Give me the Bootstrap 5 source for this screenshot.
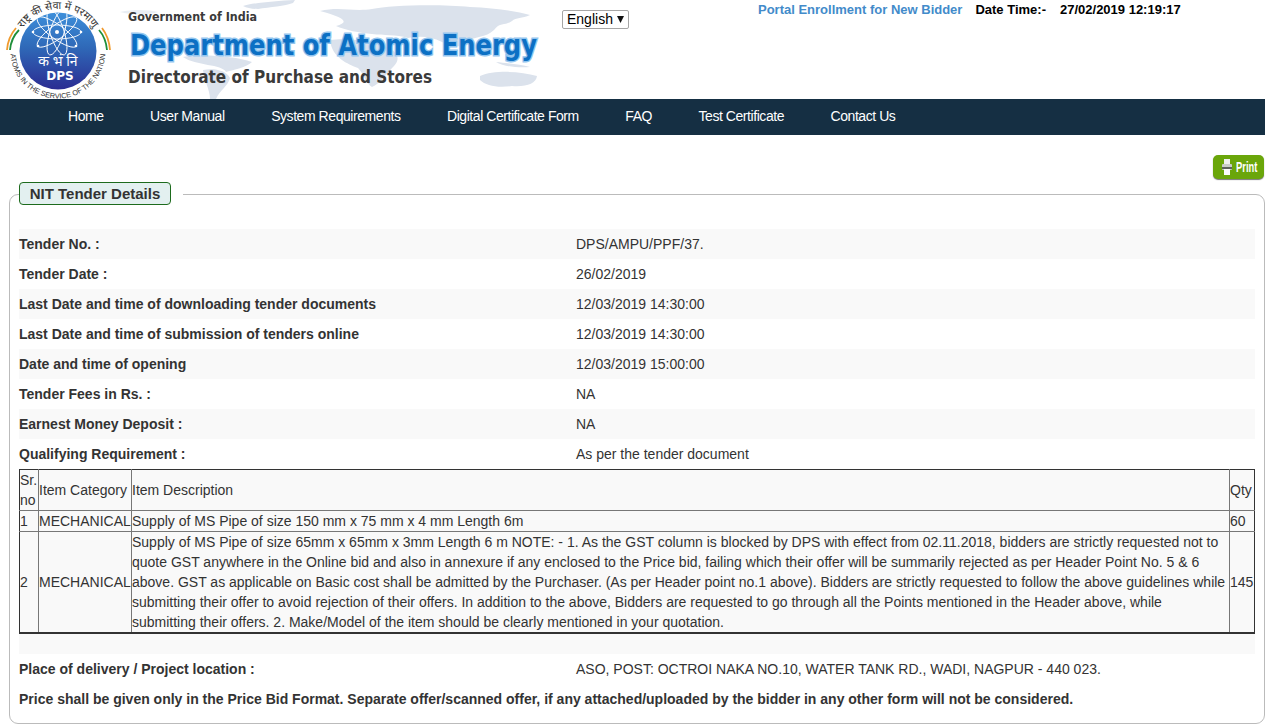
<!DOCTYPE html>
<html lang="en">
<head>
  <meta charset="UTF-8" />
  <meta name="viewport" content="width=device-width, initial-scale=1.0" />
  <title>NIT Tender Details</title>
  <link href="https://cdn.jsdelivr.net/npm/bootstrap@5.3.3/dist/css/bootstrap.min.css" rel="stylesheet" />
  <style>
    body { font-family: "Liberation Sans", Arial, sans-serif; font-size: 14px; color: #333; background: #fff; }

    /* header */
    .site-head { height: 99px; overflow: hidden; }
    .head-map { position: absolute; left: 0; top: 0; }
    .head-logo { width: 128px; height: 99px; flex: none; }
    .head-titles { width: 434px; height: 99px; flex: none; font-family: "DejaVu Sans", sans-serif; font-weight: 700; }
    .gov-text { font-size: 12.5px; fill: #3a3a3a; }
    .dept-text { font-size: 28px; fill: #0c70c4; stroke: #93c5ee; stroke-width: 3px; paint-order: stroke fill; }
    .dir-text { font-size: 18px; fill: #3a3a3a; }
    .lang-pick { width: 67px; height: 19px; margin-top: 10px; padding: 0 0 0 4px; font-size: 14px; line-height: 17px; font-family: "Liberation Sans", Arial, sans-serif; color: #000; appearance: none; background: #fff url("data:image/svg+xml,%3Csvg xmlns='http://www.w3.org/2000/svg' width='7' height='7'%3E%3Cpath d='M0 0h7L3.5 7z' fill='%23111'/%3E%3C/svg%3E") no-repeat 54px 5px; border: 1px solid #a6a6a6; border-radius: 2px; }
    .head-right { position: relative; margin-left: 129px; margin-top: 2px; font-weight: 700; font-size: 13px; line-height: 16px; white-space: nowrap; color: #000; }
    .enroll-link { color: #428bca; text-decoration: none; margin-right: 13px; }
    .stamp-gap { margin-left: 14px; }

    /* nav */
    .main-nav { background: #152f43; height: 36px; padding: 0 0 0 68px; gap: 46.5px; }
    .main-nav a { color: #fff; text-decoration: none; font-size: 14px; letter-spacing: -.44px; line-height: 35px; padding: 0; }

    /* print */
    .print-bar { height: 59px; padding-top: 20px; padding-right: 1px; }
    .print-btn { width: 51px; height: 24px; background: #6aa60a; color: #fff; border-radius: 5px; font-weight: 700; font-size: 14px; box-shadow: 0 1px 1px #777; gap: 4px; border: 0; padding: 0 0 0 9px; }
    .print-word { display: inline-block; width: 22px; text-align: left; transform: scaleX(.67); transform-origin: left center; }

    /* fieldset */
    .nit-box { position: relative; margin-left: 9px; height: 530px; border: 1px solid #bbb; border-radius: 9px; padding: 34px 9px 0 9px; }
    .nit-legend { position: absolute; left: 9px; top: -13px; background: #fff; padding: 0 12px 0 0; }
    .nit-legend span { display: block; width: 152px; height: 23px; line-height: 21px; text-align: center; font-size: 15px; font-weight: 700; background: #e3f0f0; border: 1px solid #1d6b1d; border-radius: 4px; color: #333; }
    .info-row { height: 30px; line-height: 30px; }
    .info-row:nth-child(odd) { background: #f9f9f9; }
    .info-label { flex: 0 0 557px; font-weight: 700; }
    .info-wide { font-weight: 700; }
    .gap-row { height: 20px; background: #f9f9f9; }

    /* items */
    .item-grid { width: 1236px; margin: 0; border-collapse: collapse; table-layout: fixed; background: #f9f9f9; border: 1px solid #333; border-bottom-width: 2px; line-height: 20px; }
    .item-grid td { padding: 0; border: 1px solid #777; vertical-align: middle; background: #f9f9f9; color: #333; }
    .item-grid tr:first-child td { border-top-color: #333; }
    .item-grid tr:last-child td { border-bottom: 2px solid #333; }
    .item-grid td:first-child { border-left-color: #333; }
    .item-grid td:last-child { border-right-color: #333; }
    .cell-sr { width: 19px; }
    .cell-cat { width: 93px; }
    .cell-qty { width: 25px; }
  </style>
</head>
<body>
  <!-- header -->
  <header class="site-head position-relative d-flex">
    <svg class="head-map" width="620" height="99" viewBox="0 0 620 99" fill="#dbe2ec">
      <path d="M120 12 C135 9 150 10 158 12 C150 15 130 15 120 12Z" opacity=".6"/>
      <path d="M243 6 C252 3 275 1 295 0 L293 3 C285 6 270 7 258 9 C252 9 247 8 243 6Z"/>
      <path d="M320 11 C340 6 352 12 372 9 C390 5 440 4 470 7 C495 8 515 11 530 15 C522 19 516 17 512 21 C506 26 500 22 494 30 C486 38 474 36 466 42 C458 50 452 46 442 42 C430 36 420 36 408 38 C396 34 384 36 372 34 C360 33 345 30 336 26 C350 22 345 18 320 11Z"/>
      <path d="M330 40 C345 38 370 40 384 46 C396 50 402 58 394 66 C386 74 380 84 372 87 C366 84 364 74 358 68 C348 64 332 58 330 40Z"/>
      <path d="M183 57 C200 54 235 56 252 62 C246 68 232 70 226 72 C222 64 196 66 183 57Z"/>
      <path d="M203 70 C214 68 226 70 230 78 C228 86 220 90 216 99 L210 99 C210 90 204 80 203 70Z"/>
      <path d="M480 76 C494 70 520 71 537 76 C536 84 526 87 512 86 C498 88 486 86 480 80Z"/>
      <path d="M496 62 C505 63 520 64 530 67 C520 68 504 67 496 62Z"/>
    </svg>

    <div class="head-logo position-relative">
      <svg width="128" height="99" viewBox="0 0 128 99">
        <defs>
          <linearGradient id="logoFill" x1="0" y1="0" x2="0" y2="1">
            <stop offset="0" stop-color="#3d8fda"/>
            <stop offset=".45" stop-color="#2f69b8"/>
            <stop offset="1" stop-color="#2b2c92"/>
          </linearGradient>
          <clipPath id="logoClip"><circle cx="58" cy="51" r="38.5"/></clipPath>
          <path id="arcTop" d="M16 51 A42 42 0 0 1 100 51"/>
          <path id="arcBottom" d="M10.5 51 A47.5 47.5 0 0 0 105.5 51"/>
        </defs>
        <g fill="none" stroke-width="1.8">
          <path d="M7 50 Q8 37 16 28" stroke="#f09a2e"/>
          <path d="M10 50 Q11 38 19 30" stroke="#1f8f3a"/>
          <path d="M110 50 Q109 37 102 28" stroke="#f09a2e"/>
          <path d="M107 50 Q106 38 99 30" stroke="#1f8f3a"/>
        </g>
        <circle cx="58" cy="51" r="38.5" fill="url(#logoFill)"/>
        <g clip-path="url(#logoClip)">
          <g fill="none" stroke="#fff" stroke-width=".9" transform="translate(57 32)">
            <ellipse rx="24" ry="7"/>
            <ellipse rx="24" ry="7" transform="rotate(36)"/>
            <ellipse rx="24" ry="7" transform="rotate(72)"/>
            <ellipse rx="24" ry="7" transform="rotate(108)"/>
            <ellipse rx="24" ry="7" transform="rotate(144)"/>
            <circle r="2" fill="#fff" stroke="none"/>
            <circle cx="-24" cy="0" r="1.3" fill="#fff" stroke="none"/>
            <circle cx="24" cy="0" r="1.3" fill="#fff" stroke="none"/>
            <circle cx="-19" cy="14" r="1.3" fill="#fff" stroke="none"/>
            <circle cx="19" cy="14" r="1.3" fill="#fff" stroke="none"/>
          </g>
        </g>
        <text x="58" y="66" text-anchor="middle" font-family="'Noto Sans','DejaVu Sans',sans-serif" font-size="14" fill="#fff">क भं नि</text>
        <text x="60" y="80" text-anchor="middle" font-family="'DejaVu Sans',sans-serif" font-weight="700" font-size="12" fill="#fff">DPS</text>
        <text font-family="'Noto Sans','DejaVu Sans',sans-serif" font-size="10.5" fill="#333"><textPath href="#arcTop" startOffset="50%" text-anchor="middle">राष्ट्र की सेवा में परमाणु</textPath></text>
        <text font-family="'Liberation Sans',sans-serif" font-size="7.3" fill="#333"><textPath href="#arcBottom" startOffset="50%" text-anchor="middle">ATOMS IN THE SERVICE OF THE NATION</textPath></text>
      </svg>
    </div>

    <div class="head-titles position-relative">
      <svg width="434" height="99" viewBox="0 0 434 99">
        <text class="gov-text" x="0" y="21" textLength="129" lengthAdjust="spacingAndGlyphs">Government of India</text>
        <text class="dept-text" x="2" y="55" textLength="407" lengthAdjust="spacingAndGlyphs">Department of Atomic Energy</text>
        <text class="dir-text" x="0" y="83" textLength="304" lengthAdjust="spacingAndGlyphs">Directorate of Purchase and Stores</text>
      </svg>
    </div>

    <select class="lang-pick position-relative"><option>English</option></select>

    <div class="head-right">
      <a class="enroll-link" href="#">Portal Enrollment for New Bidder</a>Date Time:-<span class="stamp-gap">27/02/2019 12:19:17</span>
    </div>
  </header>

  <!-- menu -->
  <nav class="nav main-nav">
    <a class="nav-link" href="#">Home</a>
    <a class="nav-link" href="#">User Manual</a>
    <a class="nav-link" href="#">System Requirements</a>
    <a class="nav-link" href="#">Digital Certificate Form</a>
    <a class="nav-link" href="#">FAQ</a>
    <a class="nav-link" href="#">Test Certificate</a>
    <a class="nav-link" href="#">Contact Us</a>
  </nav>

  <div class="print-bar d-flex justify-content-end">
    <button type="button" class="print-btn d-flex align-items-center">
      <svg width="10" height="16" viewBox="0 0 10 16">
        <rect x="2" y="0" width="6" height="5" fill="#eef0ee"/>
        <rect x="0" y="5" width="10" height="6" rx="1" fill="#c9cdc9"/>
        <rect x="0" y="8" width="10" height="2" fill="#5c625c"/>
        <rect x="2" y="10" width="6" height="6" fill="#fbfbfb"/>
      </svg>
      <span class="print-word">Print</span>
    </button>
  </div>

  <!-- tender details -->
  <div class="nit-box">
    <div class="nit-legend"><span>NIT Tender Details</span></div>

    <div class="info-rows">
      <div class="info-row d-flex"><div class="info-label">Tender No. :</div><div>DPS/AMPU/PPF/37.</div></div>
      <div class="info-row d-flex"><div class="info-label">Tender Date :</div><div>26/02/2019</div></div>
      <div class="info-row d-flex"><div class="info-label">Last Date and time of downloading tender documents</div><div>12/03/2019 14:30:00</div></div>
      <div class="info-row d-flex"><div class="info-label">Last Date and time of submission of tenders online</div><div>12/03/2019 14:30:00</div></div>
      <div class="info-row d-flex"><div class="info-label">Date and time of opening</div><div>12/03/2019 15:00:00</div></div>
      <div class="info-row d-flex"><div class="info-label">Tender Fees in Rs. :</div><div>NA</div></div>
      <div class="info-row d-flex"><div class="info-label">Earnest Money Deposit :</div><div>NA</div></div>
      <div class="info-row d-flex"><div class="info-label">Qualifying Requirement :</div><div>As per the tender document</div></div>
    </div>

    <table class="item-grid">
      <tr>
        <td class="cell-sr">Sr. no</td>
        <td class="cell-cat">Item Category</td>
        <td>Item Description</td>
        <td class="cell-qty">Qty</td>
      </tr>
      <tr>
        <td>1</td>
        <td>MECHANICAL</td>
        <td>Supply of MS Pipe of size 150 mm x 75 mm x 4 mm Length 6m</td>
        <td>60</td>
      </tr>
      <tr>
        <td>2</td>
        <td>MECHANICAL</td>
        <td>Supply of MS Pipe of size 65mm x 65mm x 3mm Length 6 m NOTE: - 1. As the GST column is blocked by DPS with effect from 02.11.2018, bidders are strictly requested not to quote GST anywhere in the Online bid and also in annexure if any enclosed to the Price bid, failing which their offer will be summarily rejected as per Header Point No. 5 &amp; 6 above. GST as applicable on Basic cost shall be admitted by the Purchaser. (As per Header point no.1 above). Bidders are strictly requested to follow the above guidelines while submitting their offer to avoid rejection of their offers. In addition to the above, Bidders are requested to go through all the Points mentioned in the Header above, while submitting their offers. 2. Make/Model of the item should be clearly mentioned in your quotation.</td>
        <td>145</td>
      </tr>
    </table>

    <div class="gap-row"></div>
    <div class="info-row d-flex bg-white"><div class="info-label">Place of delivery / Project location :</div><div>ASO, POST: OCTROI NAKA NO.10, WATER TANK RD., WADI, NAGPUR - 440 023.</div></div>
    <div class="info-row d-flex price-note"><div class="info-wide">Price shall be given only in the Price Bid Format. Separate offer/scanned offer, if any attached/uploaded by the bidder in any other form will not be considered.</div></div>
  </div>

  <script src="https://cdn.jsdelivr.net/npm/bootstrap@5.3.3/dist/js/bootstrap.bundle.min.js"></script>
</body>
</html>
